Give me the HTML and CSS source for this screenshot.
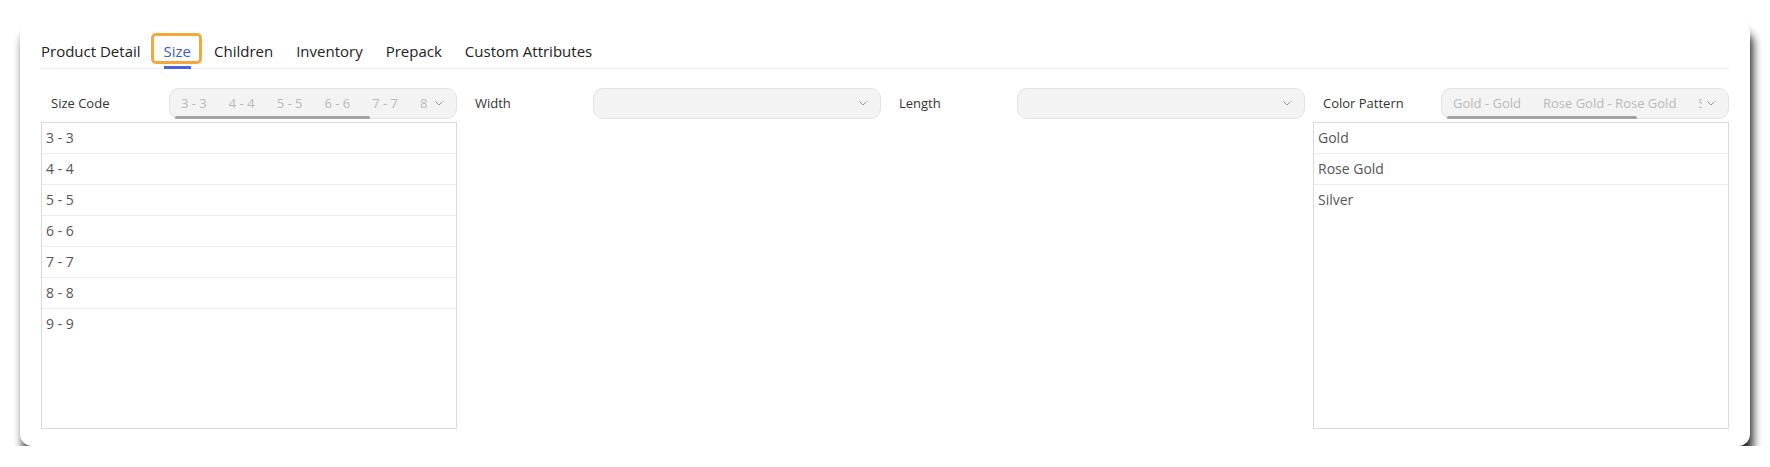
FILE: index.html
```html
<!DOCTYPE html>
<html lang="en">
<head>
    <meta charset="UTF-8">
    <meta name="viewport" content="width=device-width, initial-scale=1.0">
    <title>Product - Size</title>
    <link rel="stylesheet" href="styles.css">
</head>
<body>
    <div class="card">
        <nav class="tabs">
            <span class="tab">Product Detail</span>
            <span class="tab active">Size</span>
            <span class="tab">Children</span>
            <span class="tab">Inventory</span>
            <span class="tab">Prepack</span>
            <span class="tab">Custom Attributes</span>
        </nav>

        <div class="columns">
            <div class="column">
                <div class="field">
                    <label>Size Code</label>
                    <div class="select">
                        <div class="tags">
                            <span>3 - 3</span>
                            <span>4 - 4</span>
                            <span>5 - 5</span>
                            <span>6 - 6</span>
                            <span>7 - 7</span>
                            <span>8 - 8</span>
                            <span>9 - 9</span>
                        </div>
                        <svg class="chevron" width="10" height="6" viewBox="0 0 10 6"><path d="M1.5 1.5l3.5 3.5 3.5-3.5" fill="none" stroke="#9a9a9a" stroke-width="1"/></svg>
                        <div class="thumb" style="width: 195px"></div>
                    </div>
                </div>
                <ul class="list">
                    <li>3 - 3</li>
                    <li>4 - 4</li>
                    <li>5 - 5</li>
                    <li>6 - 6</li>
                    <li>7 - 7</li>
                    <li>8 - 8</li>
                    <li>9 - 9</li>
                </ul>
            </div>

            <div class="column">
                <div class="field">
                    <label>Width</label>
                    <div class="select">
                        <div class="tags"></div>
                        <svg class="chevron" width="10" height="6" viewBox="0 0 10 6"><path d="M1.5 1.5l3.5 3.5 3.5-3.5" fill="none" stroke="#9a9a9a" stroke-width="1"/></svg>
                    </div>
                </div>
            </div>

            <div class="column">
                <div class="field">
                    <label>Length</label>
                    <div class="select">
                        <div class="tags"></div>
                        <svg class="chevron" width="10" height="6" viewBox="0 0 10 6"><path d="M1.5 1.5l3.5 3.5 3.5-3.5" fill="none" stroke="#9a9a9a" stroke-width="1"/></svg>
                    </div>
                </div>
            </div>

            <div class="column">
                <div class="field">
                    <label>Color Pattern</label>
                    <div class="select">
                        <div class="tags">
                            <span>Gold - Gold</span>
                            <span>Rose Gold - Rose Gold</span>
                            <span>Silver - Silver</span>
                        </div>
                        <svg class="chevron" width="10" height="6" viewBox="0 0 10 6"><path d="M1.5 1.5l3.5 3.5 3.5-3.5" fill="none" stroke="#9a9a9a" stroke-width="1"/></svg>
                        <div class="thumb" style="width: 190px"></div>
                    </div>
                </div>
                <ul class="list">
                    <li>Gold</li>
                    <li>Rose Gold</li>
                    <li>Silver</li>
                </ul>
            </div>
        </div>
    </div>
</body>
</html>
```

FILE: styles.css
```css
body {
    font-family: "Segoe UI", "Open Sans", Arial, sans-serif;
    margin: 0;
    padding: 0;
    background-color: #fff;
    color: #333;
}
.card {
    margin: 21px 20px 0;
    padding: 14px 21px 17px;
    background-color: #fff;
    border-radius: 12px;
    box-shadow: 3px 11px 10px rgba(0, 0, 0, 0.85);
}
.tabs {
    display: flex;
    gap: 23px;
    border-bottom: 1px solid #ececec;
}
.tab {
    position: relative;
    padding: 5px 0 6px;
    font-size: 15px;
    line-height: 22px;
    color: #222;
}
.tab.active {
    color: #4157d6;
}
.tab.active::after {
    content: "";
    position: absolute;
    left: 0;
    right: 0;
    bottom: -1px;
    height: 3px;
    background-color: #4a63e0;
}
.tab.active::before {
    content: "";
    position: absolute;
    top: -2px;
    bottom: 4px;
    left: -13px;
    right: -11px;
    border: 3px solid #f5a73c;
    border-radius: 5px;
}
.columns {
    display: grid;
    grid-template-columns: repeat(4, minmax(0, 1fr));
    gap: 8px;
    margin-top: 19px;
}
.field {
    display: flex;
    align-items: center;
    height: 30px;
}
.field label {
    flex-shrink: 0;
    width: 118px;
    padding-left: 10px;
    font-size: 13px;
    color: #333;
}
.select {
    position: relative;
    flex: 1;
    display: flex;
    align-items: center;
    height: 29px;
    padding: 0 12px 0 11px;
    background-color: #f3f3f3;
    border: 1px solid #e2e2e2;
    border-radius: 10px;
    min-width: 0;
}
.tags {
    flex: 1;
    display: flex;
    gap: 22px;
    min-width: 0;
    overflow: hidden;
    white-space: nowrap;
    font-size: 13px;
    color: #b9b9b9;
    margin-right: 4px;
}
.chevron {
    flex-shrink: 0;
}
.thumb {
    position: absolute;
    left: 5px;
    bottom: -1px;
    height: 3px;
    border-radius: 2px;
    background-color: #a3a3a3;
}
.list {
    list-style: none;
    margin: 4px 0 0;
    padding: 0;
    height: 305px;
    border: 1px solid #d9d9d9;
}
.list li {
    height: 30px;
    line-height: 29px;
    padding-left: 4px;
    font-size: 14px;
    color: #555;
    border-bottom: 1px solid #ececec;
}
.list li:last-child {
    border-bottom: none;
}
```
